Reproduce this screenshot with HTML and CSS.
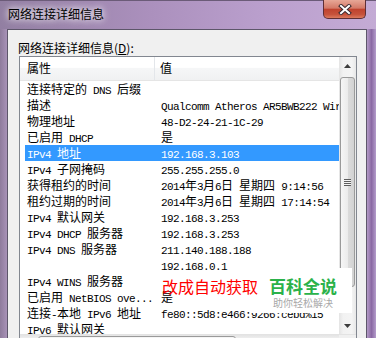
FILE: index.html
```html
<!DOCTYPE html>
<html lang="zh-CN">
<head>
    <meta charset="UTF-8">
    <meta name="viewport" content="width=device-width, initial-scale=1.0">
    <title>网络连接详细信息</title>
    <link rel="stylesheet" href="styles.css">
</head>
<body>
    <div class="window">
        <div class="titlebar">
            <span class="title">网络连接详细信息</span>
            <div class="close">
                <svg width="14" height="11" viewBox="0 0 14 11">
                    <path d="M3 2 L11 9 M11 2 L3 9" stroke="#3a2a30" stroke-width="4" stroke-linecap="square"/>
                    <path d="M3 2 L11 9 M11 2 L3 9" stroke="#fff" stroke-width="2" stroke-linecap="square"/>
                </svg>
            </div>
        </div>

        <div class="frame">
            <div class="side-left"></div>
            <div class="panel">
                <div class="caption">网络连接详细信息(<u>D</u>):</div>

                <div class="listbox">
                    <div class="listmain">
                        <div class="list">
                            <div class="header">
                                <div class="hname">属性</div>
                                <div class="hval">值</div>
                            </div>
                            <div class="rows">
                                <div class="row"><div class="name">连接特定的<span class="m"> DNS </span>后缀</div><div class="val"></div></div>
                                <div class="row"><div class="name">描述</div><div class="val"><span class="m">Qualcomm Atheros AR5BWB222 Wireless Network Adapter</span></div></div>
                                <div class="row"><div class="name">物理地址</div><div class="val"><span class="m">48-D2-24-21-1C-29</span></div></div>
                                <div class="row"><div class="name">已启用<span class="m"> DHCP</span></div><div class="val">是</div></div>
                                <div class="row selected"><div class="name"><span class="m">IPv4 </span>地址</div><div class="val"><span class="m">192.168.3.103</span></div></div>
                                <div class="row"><div class="name"><span class="m">IPv4 </span>子网掩码</div><div class="val"><span class="m">255.255.255.0</span></div></div>
                                <div class="row"><div class="name">获得租约的时间</div><div class="val"><span class="m">2014</span>年<span class="m">3</span>月<span class="m">6</span>日<span class="m"> </span>星期四<span class="m"> 9:14:56</span></div></div>
                                <div class="row"><div class="name">租约过期的时间</div><div class="val"><span class="m">2014</span>年<span class="m">3</span>月<span class="m">6</span>日<span class="m"> </span>星期四<span class="m"> 17:14:54</span></div></div>
                                <div class="row"><div class="name"><span class="m">IPv4 </span>默认网关</div><div class="val"><span class="m">192.168.3.253</span></div></div>
                                <div class="row"><div class="name"><span class="m">IPv4 DHCP </span>服务器</div><div class="val"><span class="m">192.168.3.253</span></div></div>
                                <div class="row"><div class="name"><span class="m">IPv4 DNS </span>服务器</div><div class="val"><span class="m">211.140.188.188</span></div></div>
                                <div class="row"><div class="name"></div><div class="val"><span class="m">192.168.0.1</span></div></div>
                                <div class="row"><div class="name"><span class="m">IPv4 WINS </span>服务器</div><div class="val"></div></div>
                                <div class="row"><div class="name">已启用<span class="m"> NetBIOS ove...</span></div><div class="val">是</div></div>
                                <div class="row"><div class="name">连接<span class="m">-</span>本地<span class="m"> IPv6 </span>地址</div><div class="val"><span class="m">fe80::5d8:e466:9266:cebd%15</span></div></div>
                                <div class="row"><div class="name"><span class="m">IPv6 </span>默认网关</div><div class="val"></div></div>
                            </div>
                        </div>

                        <div class="vscroll">
                            <div class="sbtn">
                                <svg width="7" height="4" viewBox="0 0 7 4"><path d="M0 4 L3.5 0 L7 4Z" fill="#3c3c3c"/></svg>
                            </div>
                            <div class="vthumb"><div class="grip"></div></div>
                            <div class="track"></div>
                            <div class="sbtn">
                                <svg width="7" height="4" viewBox="0 0 7 4"><path d="M0 0 L3.5 4 L7 0Z" fill="#3c3c3c"/></svg>
                            </div>
                        </div>
                    </div>

                    <div class="hscroll">
                        <div class="hbar">
                            <div class="hbtn"></div>
                            <div class="hthumb"></div>
                        </div>
                        <div class="corner"></div>
                    </div>
                </div>
            </div>
            <div class="side-right"></div>
        </div>
    </div>

    <!-- 图片上的标注 -->
    <div class="note">改成自动获取</div>
    <div class="stamp">
        <div class="stamp-title">百科全说</div>
        <div class="stamp-sub">助你轻松解决</div>
    </div>
</body>
</html>
```

FILE: styles.css
```css
* {
    box-sizing: border-box;
}

body {
    margin: 0;
    width: 376px;
    height: 338px;
    overflow: hidden;
    position: relative;
    background-color: #a58fb4;
    font-family: "Noto Sans CJK SC", sans-serif;
    color: #000;
}

.window {
    display: flex;
    flex-direction: column;
    height: 338px;
}

.titlebar {
    height: 29px;
    flex-shrink: 0;
    display: flex;
    align-items: flex-start;
    border-top: 1px solid #6b5b78;
    background: linear-gradient(to right, #927fa2, #ab90bd 40%, #bba0ce 72%, #c4abd5);
}

.title {
    margin: 5px 0 0 8px;
    font-size: 12px;
    line-height: 16px;
    text-shadow: 0 0 6px #fff, 0 0 10px rgba(255, 255, 255, 0.8);
}

.close {
    margin-left: auto;
    margin-right: 10px;
    width: 43px;
    height: 19px;
    margin-top: -1px;
    border: 1px solid #5e2f36;
    border-top: none;
    border-radius: 0 0 5px 5px;
    background: linear-gradient(#e7a797, #d47a68 45%, #c0432f 52%, #c6523b 80%, #dc7a5e);
    display: flex;
    align-items: center;
    justify-content: center;
}

.frame {
    flex: 1;
    display: flex;
    min-height: 0;
}

.side-left {
    width: 7px;
    background: linear-gradient(to right, #8e7b9c, #a892b7);
}

.side-right {
    width: 9px;
    background: linear-gradient(to right, #b39ac6, #8b6aa4 50%, #b49ccb);
}

.panel {
    flex: 1;
    background-color: #f0f0f0;
    border: 1px solid #5d566a;
    border-bottom: none;
    padding: 11px 0 0 11px;
    overflow: hidden;
}

.caption {
    height: 15px;
    margin-left: -1px;
    font-size: 12px;
    line-height: 14px;
}

.listbox {
    width: 338px;
    border: 1px solid #828790;
    background-color: #fff;
}

.listmain {
    display: flex;
    height: 277px;
}

.list {
    width: 319px;
    overflow: hidden;
}

.header {
    height: 24px;
    display: flex;
    font-size: 12px;
    line-height: 22px;
    background: linear-gradient(#fff, #fff 45%, #f5f6f7 50%, #f0f1f2);
    border-bottom: 1px solid #e5e5e5;
}

.hname {
    width: 135px;
    padding-left: 7px;
    border-right: 1px solid #e3e6ea;
}

.hval {
    padding-left: 5px;
}

.rows {
    height: 253px;
    overflow: hidden;
}

.row {
    display: flex;
    height: 16px;
    width: 314px;
    margin-left: 5px;
    font-size: 12px;
    line-height: 16px;
    white-space: nowrap;
    overflow: hidden;
}

.row.selected {
    background-color: #3399ff;
    color: #fff;
}

.name {
    width: 136px;
    flex-shrink: 0;
    padding-left: 2px;
    overflow: hidden;
}

.val {
    flex: 1;
    overflow: hidden;
}

.m {
    font-family: "Liberation Mono", monospace;
    font-size: 11px;
    letter-spacing: -0.6px;
}

.vscroll {
    width: 17px;
    display: flex;
    flex-direction: column;
    background: linear-gradient(to right, #e4e4e4, #f2f2f2 25%, #f4f4f4 75%, #e8e8e8);
}

.sbtn {
    height: 17px;
    display: flex;
    align-items: center;
    justify-content: center;
}

.vthumb {
    margin: 3px 1px 0;
    height: 210px;
    border: 1px solid #9a9a9a;
    border-radius: 3px;
    background: linear-gradient(to right, #f6f6f6, #ececec 50%, #dcdcdc 52%, #d2d2d2);
    display: flex;
    align-items: center;
    justify-content: center;
}

.grip {
    width: 7px;
    height: 7px;
    background: repeating-linear-gradient(#5e5e5e 0, #5e5e5e 1px, #f4f4f4 1px, #f4f4f4 2px);
}

.track {
    flex: 1;
}

.hscroll {
    display: flex;
    height: 17px;
    border-top: 1px solid #e3e3e3;
}

.hbar {
    width: 319px;
    display: flex;
    background: linear-gradient(#e4e4e4, #f3f3f3 30%, #f3f3f3);
}

.hbtn {
    width: 17px;
}

.hthumb {
    width: 198px;
    margin: 1px 0 0 1px;
    border: 1px solid #9a9a9a;
    border-radius: 3px;
    background: linear-gradient(#f6f6f6, #ececec 50%, #dcdcdc);
}

.corner {
    flex: 1;
    background-color: #f0f0f0;
}

.note {
    position: absolute;
    left: 162px;
    top: 277px;
    z-index: 2;
    font-size: 16px;
    line-height: 18px;
    color: #ff0000;
}

.stamp {
    position: absolute;
    left: 250px;
    top: 268px;
    width: 102px;
    height: 45px;
    z-index: 1;
    background-color: #fff;
    padding-left: 19px;
}

.stamp-title {
    margin-top: 8px;
    font-size: 17px;
    line-height: 20px;
    font-weight: bold;
    color: #2bb24a;
}

.stamp-sub {
    margin-left: 4px;
    font-size: 10px;
    line-height: 13px;
    color: #a8a8a8;
}
```
